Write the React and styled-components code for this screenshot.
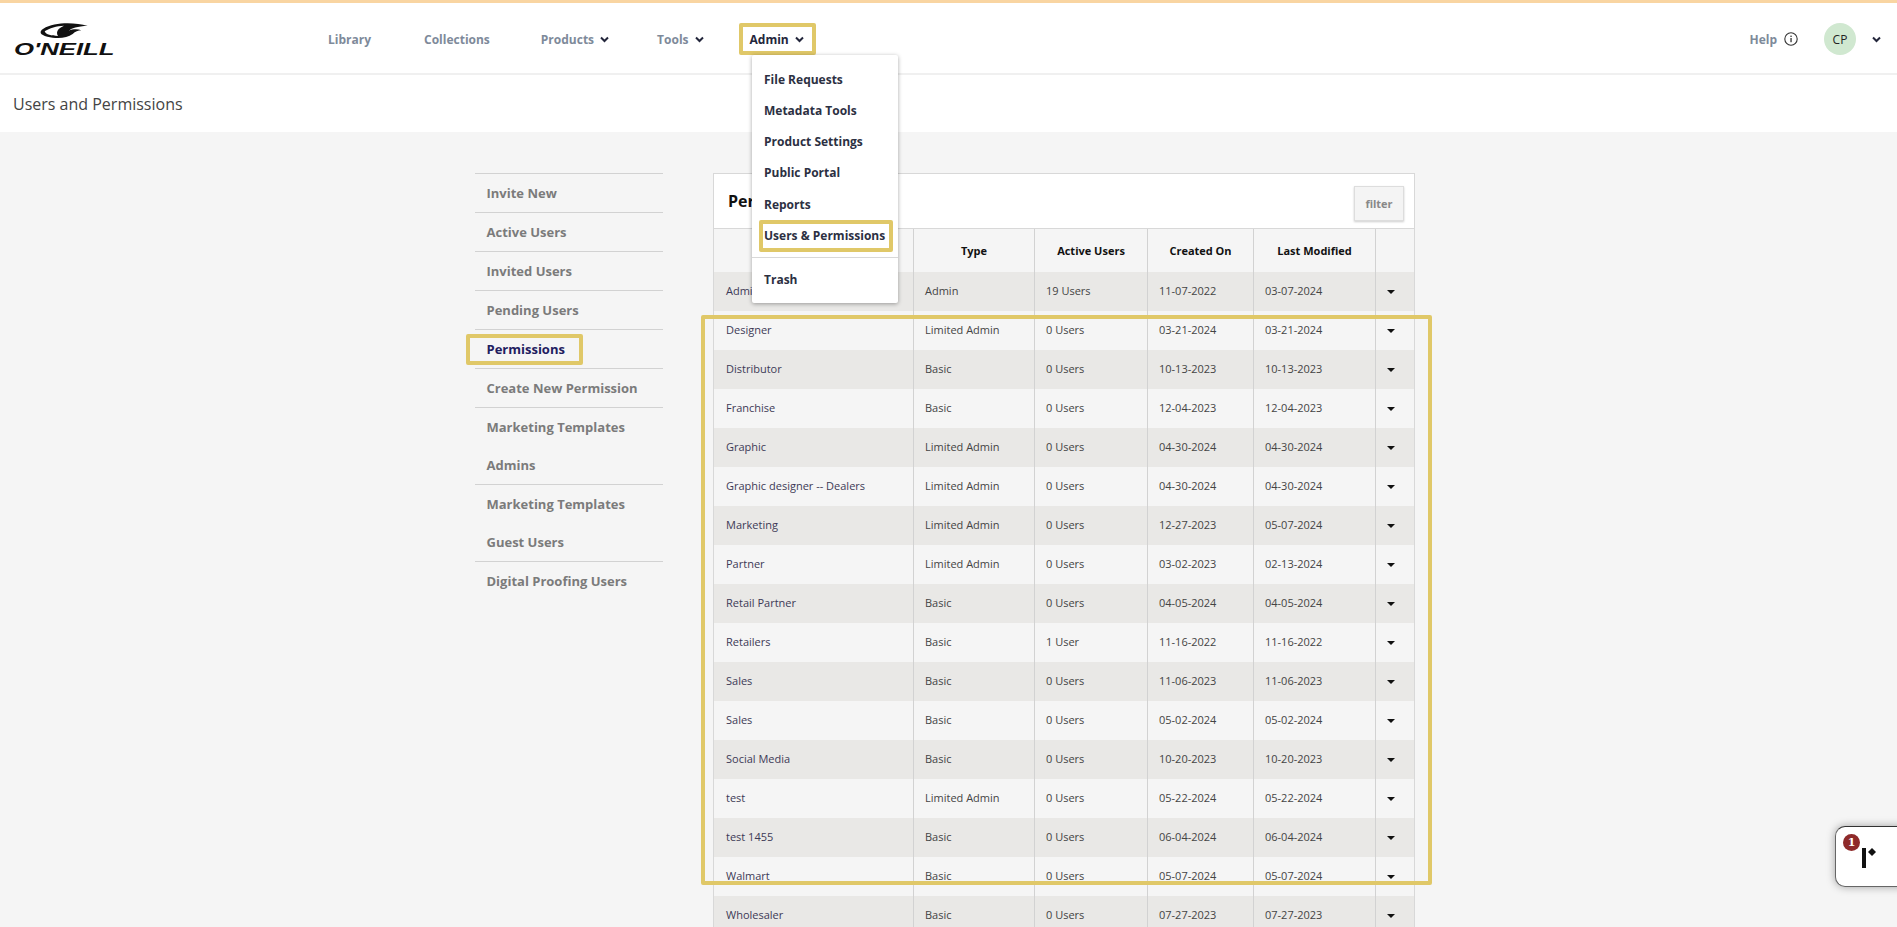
import React from 'react';
import styled, { createGlobalStyle } from 'styled-components';

const Global = createGlobalStyle`
  html, body { margin: 0; padding: 0; height: 100%; overflow: hidden; background: #f5f5f5; }
  body { font-family: "Open Sans", "Liberation Sans", sans-serif; color: #333; }
  * { box-sizing: border-box; }
`;

const gold = '#e0c868';

const Page = styled.div`height: 927px; overflow: hidden; position: relative;`;
const Stripe = styled.div`height: 3px; background: #f9d5a2;`;
const Header = styled.header`
  height: 72px; background: #fff; border-bottom: 2px solid #f0f0f0;
  display: flex; align-items: flex-start; position: relative;
`;
const LogoWrap = styled.div`width: 328px; padding: 17px 0 0 14px; flex: none;`;
const LogoMark = styled.svg`display: block; margin-left: 22px; width: 56px; height: 22px;`;
const LogoWord = styled.div`
  font-family: "Liberation Sans", sans-serif; font-weight: 700; font-style: italic;
  font-size: 16.5px; line-height: 14px; color: #111; white-space: nowrap;
  transform: scaleX(1.56); transform-origin: left center;
`;
const Nav = styled.nav`display: flex; align-items: flex-start; flex: 1; padding-top: 20px;`;
const NavItem = styled.a`
  display: flex; align-items: center; height: 32px; margin-left: ${p => p.$ml || 0}px;
  padding: ${p => (p.$boxed ? '0 8px 0 7px' : '0')};
  border: ${p => (p.$boxed ? `4px solid ${gold}` : 'none')};
  border-radius: ${p => (p.$boxed ? '2px' : '0')};
  font-size: 12px; font-weight: 700; color: ${p => (p.$dark ? '#23263b' : '#7e8a9a')};
  white-space: nowrap;
`;
const Chev = styled.svg`margin-left: 6px; width: 9px; height: 7px; flex: none;`;
const Right = styled.div`display: flex; align-items: center; margin-left: auto; padding: 0 16px 0 0; height: 32px;`;
const Help = styled.span`font-size: 12px; font-weight: 700; color: #7e8a9a; margin-right: 7px;`;
const InfoIcon = styled.svg`width: 14px; height: 14px; margin-right: 26px;`;
const Avatar = styled.div`
  width: 32px; height: 32px; border-radius: 50%; background: #d0e8d0;
  display: flex; align-items: center; justify-content: center; font-size: 12px; color: #222; margin-right: 10px;
`;
const TitleBar = styled.div`
  height: 57px; background: #fff; display: flex; align-items: center; padding-left: 13px;
  font-size: 16px; color: #444;
`;
const Content = styled.main`display: flex; align-items: flex-start; padding: 41px 0 0 475px; gap: 50px;`;
const Side = styled.ul`list-style: none; margin: 0; padding: 0; width: 188px; border-top: 1px solid #d2d2d2;`;
const SideItem = styled.li`
  position: relative; height: ${p => (p.$noLine ? 38 : 39)}px; border-bottom: ${p => (p.$noLine ? 'none' : '1px solid #d2d2d2')};
  display: flex; align-items: center; padding-left: 11.5px;
  font-size: 13px; font-weight: 700; white-space: nowrap;
  color: ${p => (p.$active ? '#1f2060' : '#7b7b7b')};
`;
const SideMark = styled.span`
  position: absolute; left: -9px; top: 4px; width: 117px; height: 31px; border: 4px solid ${gold}; border-radius: 2px;
`;
const Panel = styled.section`width: 702px; position: relative; border-left: 1px solid #d8d8d8; border-right: 1px solid #d8d8d8;`;
const PanelHead = styled.div`
  height: 56px; background: #fff; border-top: 1px solid #d8d8d8; border-bottom: 1px solid #d8d8d8;
  display: flex; align-items: center; justify-content: space-between; padding: 0 10px 0 14px;
`;
const PanelTitle = styled.h2`margin: 0; font-size: 16px; font-weight: 700; color: #111;`;
const FilterBtn = styled.button`
  width: 50px; height: 35px; margin-top: 5px; font: 700 11px "Open Sans", sans-serif; color: #888;
  background: #f4f4f4; border: 1px solid #ddd; box-shadow: 0 1px 2px rgba(0,0,0,.2); padding: 0;
`;
const Grid = styled.div`
  display: grid; grid-template-columns: 200px 121px 113px 106px 122px 1fr;
`;
const HeadCell = styled.div`
  height: 43px; display: flex; align-items: center; justify-content: center; padding-bottom: 1px;
  font-size: 11px; font-weight: 700; color: #111; background: #f5f5f5;
  border-right: ${p => (p.$last ? 'none' : '1px solid #d2d2d2')};
`;
const Cell = styled.div`
  height: 39px; display: flex; align-items: center; padding: 0 0 2px ${p => (p.$first ? 12 : 11)}px;
  font-size: 11px; white-space: nowrap;
  color: ${p => (p.$first ? '#3d3a56' : '#444')};
  background: ${p => (p.$odd ? '#e9e8e6' : '#f5f5f5')};
  border-right: ${p => (p.$last ? 'none' : '1px solid #d2d2d2')};
`;
const Caret = styled.span`
  width: 0; height: 0; margin-top: 2px; border-left: 4px solid transparent; border-right: 4px solid transparent; border-top: 4px solid #111;
`;
const BigMark = styled.div`
  position: absolute; left: -13px; top: 142px; width: 731px; height: 570px; border: 4px solid ${gold}; pointer-events: none; border-radius: 2px;
`;
const Menu = styled.div`
  position: absolute; left: 752px; top: 55px; width: 146px; height: 248px; background: #fff; z-index: 5;
  border-radius: 2px; box-shadow: 0 1px 4px rgba(0,0,0,.35); padding: 9px 0 0;
`;
const MenuItem = styled.div`
  position: relative; height: 31px; margin-top: ${p => p.$mt || 0}px; display: flex; align-items: center; padding-left: 12px;
  font-size: 12px; font-weight: 700; color: #2c3042; white-space: nowrap;
`;
const MenuMark = styled.span`
  position: absolute; left: 7px; top: 0; width: 134px; height: 32px; border: 4px solid ${gold}; border-radius: 2px;
`;
const MenuRule = styled.hr`margin: 6px 0 6px; border: 0; border-top: 1px solid #d8d8d8;`;
const Widget = styled.div`
  position: absolute; left: 1835px; top: 826px; width: 70px; height: 61px; background: #fff;
  border-radius: 10px 0 0 10px; border-top: 1px solid #333; border-left: 1px solid #666; border-bottom: 1px solid #666;
  box-shadow: 0 0 8px rgba(0,0,0,.35); z-index: 6;
`;
const Badge = styled.span`
  position: absolute; left: 7px; top: 7px; width: 17px; height: 17px; border-radius: 50%;
  background: #8e2a2a; color: #fff; font: 700 11px/17px "DejaVu Serif", serif; text-align: center;
`;
const WidgetIcon = styled.svg`position: absolute; left: 26px; top: 20px; width: 16px; height: 24px;`;

const NavChev = ({ color = '#23263b' }) => (
  <Chev viewBox="0 0 9 7"><path d="M1 1.5 L4.5 5 L8 1.5" fill="none" stroke={color} strokeWidth="2" /></Chev>
);

const sideItems = [
  ['Invite New'], ['Active Users'], ['Invited Users'], ['Pending Users'], ['Permissions', 'a'],
  ['Create New Permission'], ['Marketing Templates', 'n'], ['Admins'], ['Marketing Templates', 'n'],
  ['Guest Users'], ['Digital Proofing Users', 'n'],
];

const rows = [
  ['Admin', 'Admin', '19 Users', '11-07-2022', '03-07-2024'],
  ['Designer', 'Limited Admin', '0 Users', '03-21-2024', '03-21-2024'],
  ['Distributor', 'Basic', '0 Users', '10-13-2023', '10-13-2023'],
  ['Franchise', 'Basic', '0 Users', '12-04-2023', '12-04-2023'],
  ['Graphic', 'Limited Admin', '0 Users', '04-30-2024', '04-30-2024'],
  ['Graphic designer -- Dealers', 'Limited Admin', '0 Users', '04-30-2024', '04-30-2024'],
  ['Marketing', 'Limited Admin', '0 Users', '12-27-2023', '05-07-2024'],
  ['Partner', 'Limited Admin', '0 Users', '03-02-2023', '02-13-2024'],
  ['Retail Partner', 'Basic', '0 Users', '04-05-2024', '04-05-2024'],
  ['Retailers', 'Basic', '1 User', '11-16-2022', '11-16-2022'],
  ['Sales', 'Basic', '0 Users', '11-06-2023', '11-06-2023'],
  ['Sales', 'Basic', '0 Users', '05-02-2024', '05-02-2024'],
  ['Social Media', 'Basic', '0 Users', '10-20-2023', '10-20-2023'],
  ['test', 'Limited Admin', '0 Users', '05-22-2024', '05-22-2024'],
  ['test 1455', 'Basic', '0 Users', '06-04-2024', '06-04-2024'],
  ['Walmart', 'Basic', '0 Users', '05-07-2024', '05-07-2024'],
  ['Wholesaler', 'Basic', '0 Users', '07-27-2023', '07-27-2023'],
];

export default function App() {
  return (
    <Page>
      <Global />
      <Stripe />
      <Header>
        <LogoWrap>
          <LogoMark viewBox="0 0 168 66">
            <path d="M155 18 C115 6 55 6 22 26 C8 35 12 44 34 50 C60 56 92 56 110 42 C118 35 126 31 136 31 C125 26 110 27 98 32 C105 26 125 18 155 18 Z" fill="#111" />
            <path d="M26 34 C40 24 62 18 84 17 C68 24 58 34 66 48 C46 48 30 44 26 34 Z" fill="#fff" />
          </LogoMark>
          <LogoWord>O'NEILL</LogoWord>
        </LogoWrap>
        <Nav>
          <NavItem>Library</NavItem>
          <NavItem $ml={53}>Collections</NavItem>
          <NavItem $ml={51}>Products<NavChev /></NavItem>
          <NavItem $ml={48}>Tools<NavChev /></NavItem>
          <NavItem $ml={35} $boxed $dark>Admin<NavChev /></NavItem>
          <Right>
            <Help>Help</Help>
            <InfoIcon viewBox="0 0 14 14">
              <circle cx="7" cy="7" r="6.2" fill="none" stroke="#333" strokeWidth="1.1" />
              <rect x="6.4" y="6" width="1.3" height="4.2" fill="#333" />
              <rect x="6.4" y="3.6" width="1.3" height="1.4" fill="#333" />
            </InfoIcon>
            <Avatar>CP</Avatar>
            <NavChev />
          </Right>
        </Nav>
      </Header>
      <TitleBar>Users and Permissions</TitleBar>
      <Content>
        <Side>
          {sideItems.map(([t, f], i) => (
            <SideItem key={i} $active={f === 'a'} $noLine={f === 'n'}>
              {f === 'a' && <SideMark />}{t}
            </SideItem>
          ))}
        </Side>
        <Panel>
          <PanelHead>
            <PanelTitle>Permissions</PanelTitle>
            <FilterBtn>filter</FilterBtn>
          </PanelHead>
          <Grid>
            <HeadCell />
            <HeadCell>Type</HeadCell>
            <HeadCell>Active Users</HeadCell>
            <HeadCell>Created On</HeadCell>
            <HeadCell>Last Modified</HeadCell>
            <HeadCell $last />
            {rows.map((r, i) => (
              <React.Fragment key={i}>
                {r.map((c, j) => (
                  <Cell key={j} $first={j === 0} $odd={i % 2 === 0}>{c}</Cell>
                ))}
                <Cell $last $odd={i % 2 === 0}><Caret /></Cell>
              </React.Fragment>
            ))}
          </Grid>
          <BigMark />
        </Panel>
      </Content>
      <Menu>
        {['File Requests', 'Metadata Tools', 'Product Settings', 'Public Portal'].map(m => (
          <MenuItem key={m}>{m}</MenuItem>
        ))}
        <MenuItem $mt={1}>Reports</MenuItem>
        <MenuItem><MenuMark />Users &amp; Permissions</MenuItem>
        <MenuRule />
        <MenuItem>Trash</MenuItem>
      </Menu>
      <Widget>
        <Badge>1</Badge>
        <WidgetIcon viewBox="0 0 16 24">
          <rect x="0" y="1" width="4" height="20" fill="#111" />
          <path d="M10 1 L14 5 L10 9 L6 5 Z" fill="#111" />
        </WidgetIcon>
      </Widget>
    </Page>
  );
}
